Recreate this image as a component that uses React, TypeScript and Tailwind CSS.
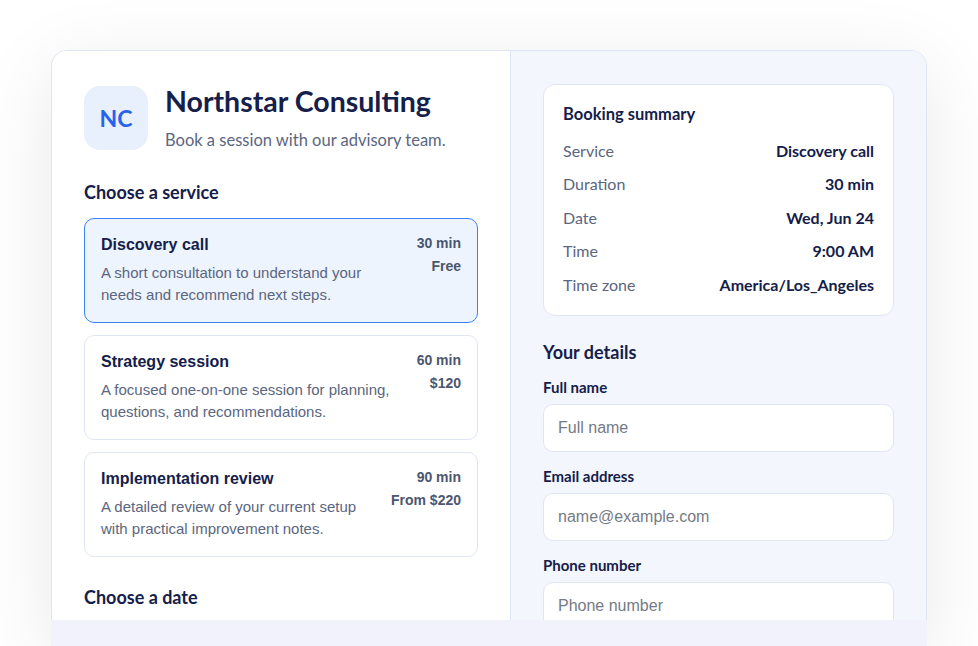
const services = [
  {
    name: "Discovery call",
    desc: ["A short consultation to understand your", "needs and recommend next steps."],
    duration: "30 min",
    price: "Free",
    selected: true,
  },
  {
    name: "Strategy session",
    desc: ["A focused one-on-one session for planning,", "questions, and recommendations."],
    duration: "60 min",
    price: "$120",
    selected: false,
  },
  {
    name: "Implementation review",
    desc: ["A detailed review of your current setup", "with practical improvement notes."],
    duration: "90 min",
    price: "From $220",
    selected: false,
  },
];

const summary = [
  ["Service", "Discovery call"],
  ["Duration", "30 min"],
  ["Date", "Wed, Jun 24"],
  ["Time", "9:00 AM"],
  ["Time zone", "America/Los_Angeles"],
];

const fields = [
  ["Full name", "Full name"],
  ["Email address", "name@example.com"],
  ["Phone number", "Phone number"],
];

const display = "font-['Lato','Noto_Sans',sans-serif]";
const body = "font-['Liberation_Sans',Arial,sans-serif]";

export default function App() {
  return (
    <div className="h-[646px] w-[978px] overflow-hidden bg-white pl-[51px] pt-[50px]">
      <div className="w-[876px] rounded-t-2xl shadow-[0_16px_80px_rgba(15,23,42,0.09)]">
        <div className="grid h-[570px] grid-cols-[459px_1fr] overflow-hidden rounded-t-2xl border border-b-0 border-[#dfe6f3]">
          {/* left column */}
          <div className="border-r border-[#dfe6f3] bg-white px-[32px] pt-[35px]">
            <div className="flex gap-[17px]">
              <div className={`flex h-[64px] w-[64px] shrink-0 items-center justify-center rounded-2xl bg-[#e8effd] text-[23px] font-bold text-[#2563eb] ${display}`}>
                NC
              </div>
              <div className="-mt-[2px]">
                <h1 className={`text-[28.5px] font-bold leading-[34px] text-[#14204a] ${display}`}>Northstar Consulting</h1>
                <p className={`mt-[11px] text-[16.5px] leading-[22px] text-[#5b6680] ${display}`}>Book a session with our advisory team.</p>
              </div>
            </div>

            <h2 className={`mt-[30px] text-[18px] font-bold leading-[22px] text-[#14204a] ${display}`}>Choose a service</h2>

            <div className="mt-[15px] flex flex-col gap-[12px]">
              {services.map((s) => (
                <div
                  key={s.name}
                  className={`flex h-[105px] justify-between rounded-[10px] border px-[16px] pt-[15px] ${
                    s.selected ? "border-[#3b82f6] bg-[#eef4fe]" : "border-[#dfe6f3] bg-white"
                  } ${body}`}
                >
                  <div>
                    <div className="text-[16px] font-bold leading-[22px] text-[#14204a]">{s.name}</div>
                    <div className="mt-[6px] text-[15px] leading-[22px] text-[#5b6680]">
                      {s.desc.map((l) => (
                        <div key={l}>{l}</div>
                      ))}
                    </div>
                  </div>
                  <div className="text-right text-[14px] font-bold leading-[23px] text-[#4b5670]">
                    <div className="-mt-[2px]">{s.duration}</div>
                    <div>{s.price}</div>
                  </div>
                </div>
              ))}
            </div>

            <h2 className={`mt-[29px] text-[18px] font-bold leading-[22px] text-[#14204a] ${display}`}>Choose a date</h2>
          </div>

          {/* right column */}
          <div className="bg-[#f3f6fd] px-[32px] pt-[33px]">
            <div className={`rounded-xl border border-[#dfe6f3] bg-white px-[19px] pb-[13px] pt-[18px] ${display}`}>
              <div className="text-[16.5px] font-bold leading-[22px] text-[#14204a]">Booking summary</div>
              <div className="mt-[9px] flex flex-col">
                {summary.map(([k, v]) => (
                  <div key={k} className="flex h-[33.5px] items-center justify-between text-[16px]">
                    <span className="text-[#5b6680]">{k}</span>
                    <span className="font-bold text-[#14204a]">{v}</span>
                  </div>
                ))}
              </div>
            </div>

            <h2 className={`mt-[25px] text-[18px] font-bold leading-[22px] text-[#14204a] ${display}`}>Your details</h2>
            <div className="mt-[14px] flex flex-col gap-[14px]">
              {fields.map(([label, ph]) => (
                <div key={label}>
                  <div className={`text-[15px] font-bold leading-[20px] text-[#14204a] ${display}`}>{label}</div>
                  <input
                    placeholder={ph}
                    className={`mt-[7px] h-[48px] w-full rounded-[10px] border border-[#dfe6f3] bg-white px-[14px] text-[16px] text-[#14204a] outline-none placeholder:text-[#757b86] ${body}`}
                  />
                </div>
              ))}
            </div>
          </div>
        </div>
        <div className="h-[26px] bg-[#f1f2fb]" />
      </div>
    </div>
  );
}
